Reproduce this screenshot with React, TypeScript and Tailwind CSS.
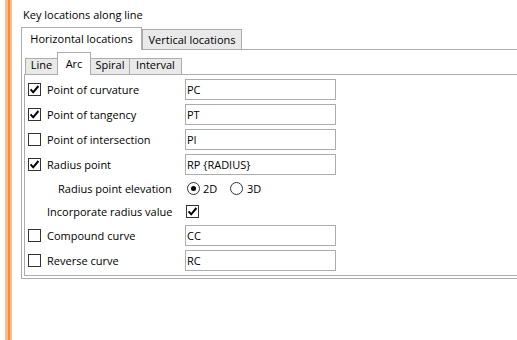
import type { ReactNode } from "react";

function CheckBox({ checked }: { checked?: boolean }) {
  return (
    <span className="w-[13px] h-[13px] shrink-0 border border-[#333333] bg-white flex items-center justify-center">
      {checked && (
        <svg width="11" height="11" viewBox="0 0 11 11">
          <path d="M1.6 5.4 L4.2 8.3 L9.4 2" fill="none" stroke="#000" strokeWidth="2" />
        </svg>
      )}
    </span>
  );
}

function Radio({ checked }: { checked?: boolean }) {
  return (
    <span className="w-[13px] h-[13px] shrink-0 rounded-full border border-[#333333] bg-white flex items-center justify-center">
      {checked && <span className="w-[5px] h-[5px] rounded-full bg-black" />}
    </span>
  );
}

function TextBox({ value }: { value: string }) {
  return (
    <div className="w-[151px] h-[21px] border border-[#abadb3] bg-white px-[1px] flex items-center">
      {value}
    </div>
  );
}

function CheckRow({ label, checked, value }: { label: string; checked?: boolean; value: string }) {
  return (
    <div className="h-[25px] flex items-center">
      <div className="w-[160px] pl-[3px] flex items-center gap-[6px]">
        <CheckBox checked={checked} />
        <span>{label}</span>
      </div>
      <TextBox value={value} />
    </div>
  );
}

function Tab({ selected, width, children, small }: { selected?: boolean; width: string; children: ReactNode; small?: boolean }) {
  if (selected) {
    return (
      <div className={`${width} h-[23px] -mb-px relative z-10 bg-white border border-b-0 border-[#acacac] flex justify-center pt-[3px]`}>
        {children}
      </div>
    );
  }
  return (
    <div
      className={`${width} ${small ? "h-[16px] leading-[12px]" : "h-[20px] pt-[2px]"} bg-[#e9e9e9] border border-b-0 border-[#acacac] flex justify-center`}
    >
      {children}
    </div>
  );
}

export default function App() {
  return (
    <div className="flex h-[340px] w-[517px] overflow-hidden bg-white text-black font-['Open_Sans',sans-serif] text-[11px] leading-[15px]">
      <div className="flex shrink-0">
        <div className="w-[5px]" />
        <div className="w-[3px] bg-[#fbbd8c]" />
        <div className="w-[2px] bg-[#f68b3b]" />
        <div className="w-[2px] bg-[#fbbd8c]" />
      </div>

      <div className="pl-[9px] flex flex-col">
        <div className="h-[27px] pl-[2px] pt-[7px]">Key locations along line</div>

        <div className="h-[22px] flex items-end">
          <Tab selected width="w-[121px]">Horizontal locations</Tab>
          <Tab width="w-[100px]">Vertical locations</Tab>
        </div>

        <div className="w-[520px] h-[230px] border border-[#acacac] p-[2px] flex flex-col">
          <div className="h-[22px] pl-px flex items-end">
            <Tab small width="w-[33px]">Line</Tab>
            <div className="-ml-px">
              <Tab selected width="w-[34px]">Arc</Tab>
            </div>
            <div className="-ml-px">
              <Tab small width="w-[40px]">Spiral</Tab>
            </div>
            <div className="-ml-px">
              <Tab small width="w-[53px]">Interval</Tab>
            </div>
          </div>

          <div className="h-[202px] border border-[#acacac] pt-[2px] flex flex-col">
            <CheckRow label="Point of curvature" checked value="PC" />
            <CheckRow label="Point of tangency" checked value="PT" />
            <CheckRow label="Point of intersection" value="PI" />
            <CheckRow label="Radius point" checked value="RP {RADIUS}" />

            <div className="h-[23px] flex items-center">
              <div className="w-[160px] pl-[33px]">Radius point elevation</div>
              <div className="ml-[2px] w-[43px] flex items-center gap-[3px]">
                <Radio checked />
                <span>2D</span>
              </div>
              <div className="flex items-center gap-[4px]">
                <Radio />
                <span>3D</span>
              </div>
            </div>

            <div className="h-[23px] flex items-center">
              <div className="w-[160px] pl-[22px]">Incorporate radius value</div>
              <div className="ml-px">
                <CheckBox checked />
              </div>
            </div>

            <CheckRow label="Compound curve" value="CC" />
            <CheckRow label="Reverse curve" value="RC" />
          </div>
        </div>
      </div>
    </div>
  );
}
